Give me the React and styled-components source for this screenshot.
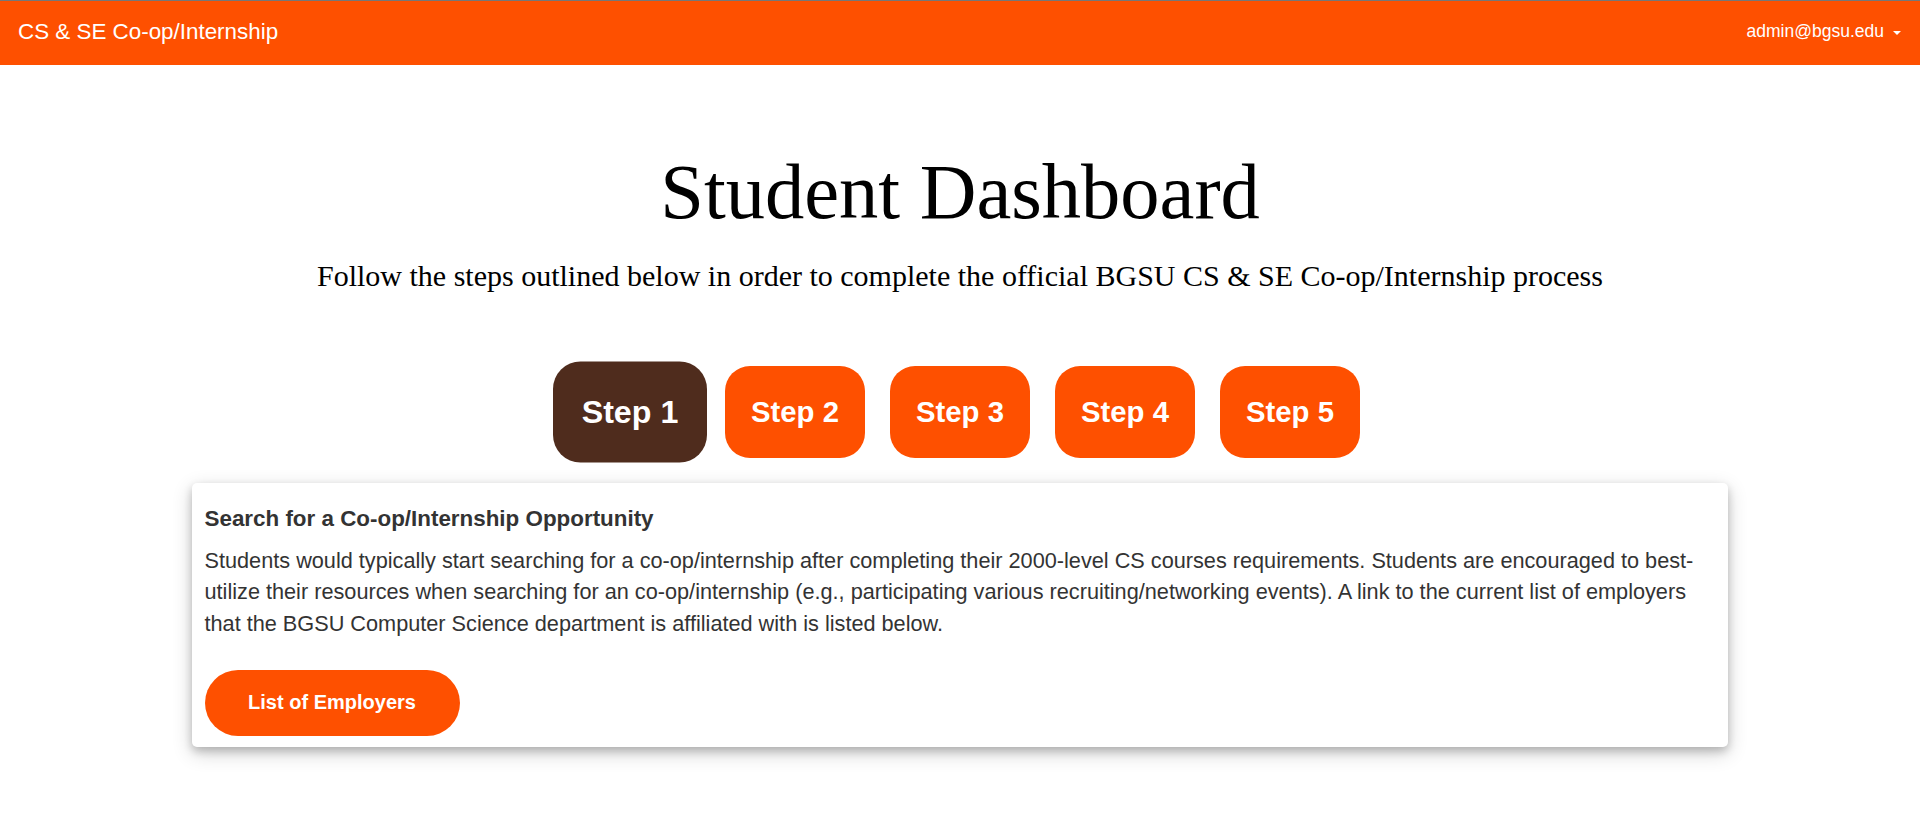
import React from 'react';
import styled, { createGlobalStyle } from 'styled-components';

const GlobalStyle = createGlobalStyle`
    html, body {
        margin:0;
        padding:0;
        background:#fff;
    }
    body {
        font-family:"Liberation Sans", Arial, sans-serif;
    }
`;

const Navbar = styled.nav`
    display:flex;
    justify-content:space-between;
    align-items:center;
    height:65px;
    padding:0 19px 3px 18px;
    box-sizing:border-box;
    border-top:1px solid #777;
    background:#fe5000;
    color:#fff;
`;
const Brand = styled.a`
    font-size:22.4px;
    color:#fff;
    text-decoration:none;
`;
const UserMenu = styled.div`
    display:flex;
    align-items:center;
    font-size:17.5px;
    cursor:pointer;
`;
const Caret = styled.span`
    display:inline-block;
    width:0;
    height:0;
    margin-left:9px;
    margin-top:2px;
    border-top:4.5px solid #fff;
    border-left:4.5px solid transparent;
    border-right:4.5px solid transparent;
`;

const Main = styled.main`
    text-align:center;
    padding:78.5px 0 40px;
`;
const Title = styled.h1`
    margin:0;
    font-family:"Liberation Serif", "Times New Roman", serif;
    font-weight:normal;
    font-size:78.5px;
    line-height:96px;
    color:#000;
`;
const Subtitle = styled.p`
    margin:18.5px 0 0;
    font-family:"Liberation Serif", "Times New Roman", serif;
    font-size:30px;
    line-height:36px;
    color:#000;
`;

const StepRow = styled.div`
    display:flex;
    justify-content:center;
    gap:25px;
    margin-top:72px;
`;
const StepButton = styled.button`
    display:flex;
    align-items:center;
    justify-content:center;
    width:140px;
    height:92px;
    padding:0;
    border:none;
    border-radius:25px;
    background:${props => props.active ? '#4f2c1d' : '#fe5000'};
    transform:${props => props.active ? 'scale(1.1)' : 'none'};
    color:#fff;
    font-family:"Liberation Sans", Arial, sans-serif;
    font-weight:bold;
    font-size:29.3px;
    cursor:pointer;
`;

const Card = styled.section`
    width:80%;
    margin:25px auto 0;
    padding:24px 12.5px 11px;
    box-sizing:border-box;
    background:#fff;
    border-radius:5px;
    box-shadow:0 4px 8px 0 rgba(0,0,0,0.2), 0 6px 20px 0 rgba(0,0,0,0.19);
    text-align:left;
    color:#333;
`;
const CardTitle = styled.h4`
    margin:0 0 13px;
    font-size:22.4px;
    line-height:1.1;
    font-weight:bold;
`;
const CardText = styled.p`
    margin:0;
    font-size:21.7px;
    line-height:31.7px;
`;
const PillButton = styled.button`
    display:block;
    width:255px;
    height:66px;
    margin-top:30px;
    border:none;
    border-radius:33px;
    background:#fe5000;
    color:#fff;
    font-family:"Liberation Sans", Arial, sans-serif;
    font-weight:bold;
    font-size:20px;
    cursor:pointer;
`;

const steps = [1, 2, 3, 4, 5];

const App = () => {
    const current = 1;
    return (
    <>
        <GlobalStyle />
        <Navbar>
            <Brand href="#">CS &amp; SE Co-op/Internship</Brand>
            <UserMenu>admin@bgsu.edu<Caret /></UserMenu>
        </Navbar>
        <Main>
            <Title>Student Dashboard</Title>
            <Subtitle>Follow the steps outlined below in order to complete the official BGSU CS &amp; SE Co-op/Internship process</Subtitle>
            <StepRow>
                {steps.map(n => (
                    <StepButton key={n} active={n === current}>Step {n}</StepButton>
                ))}
            </StepRow>
            <Card>
                <CardTitle>Search for a Co-op/Internship Opportunity</CardTitle>
                <CardText>
                    Students would typically start searching for a co-op/internship after completing their 2000-level CS courses requirements. Students are encouraged to best-utilize their resources when searching for an co-op/internship (e.g., participating various recruiting/networking events). A link to the current list of employers that the BGSU Computer Science department is affiliated with is listed below.
                </CardText>
                <PillButton>List of Employers</PillButton>
            </Card>
        </Main>
    </>
    )
}

export default App;
